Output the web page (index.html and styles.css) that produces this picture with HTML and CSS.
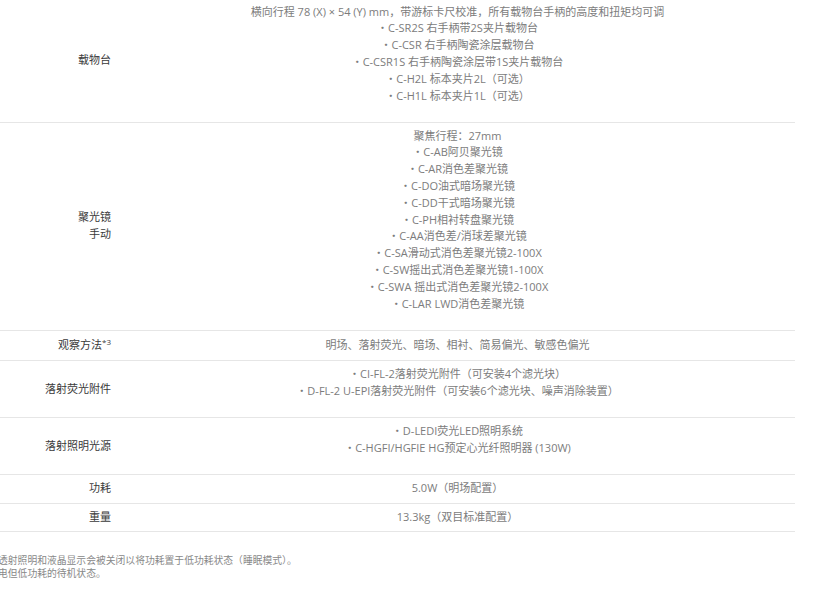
FILE: index.html
```html
<!DOCTYPE html>
<html lang="zh-CN">
<head>
<meta charset="utf-8">
<title>规格</title>
<link rel="stylesheet" href="styles.css">
</head>
<body>
<div class="page">
  <div class="spec">
    <div class="row">
      <div class="label">载物台</div>
      <div class="value multi">
        <p>横向行程 78 (X) × 54 (Y) mm，带游标卡尺校准，所有载物台手柄的高度和扭矩均可调</p>
        <p>・C-SR2S 右手柄带2S夹片载物台</p>
        <p>・C-CSR 右手柄陶瓷涂层载物台</p>
        <p>・C-CSR1S 右手柄陶瓷涂层带1S夹片载物台</p>
        <p>・C-H2L 标本夹片2L（可选）</p>
        <p>・C-H1L 标本夹片1L（可选）</p>
      </div>
    </div>
    <div class="row">
      <div class="label">聚光镜<br>手动</div>
      <div class="value multi">
        <p>聚焦行程：27mm</p>
        <p>・C-AB阿贝聚光镜</p>
        <p>・C-AR消色差聚光镜</p>
        <p>・C-DO油式暗场聚光镜</p>
        <p>・C-DD干式暗场聚光镜</p>
        <p>・C-PH相衬转盘聚光镜</p>
        <p>・C-AA消色差/消球差聚光镜</p>
        <p>・C-SA滑动式消色差聚光镜2-100X</p>
        <p>・C-SW摇出式消色差聚光镜1-100X</p>
        <p>・C-SWA 摇出式消色差聚光镜2-100X</p>
        <p>・C-LAR LWD消色差聚光镜</p>
      </div>
    </div>
    <div class="row">
      <div class="label">观察方法<sup>*3</sup></div>
      <div class="value tall"><p>明场、落射荧光、暗场、相衬、简易偏光、敏感色偏光</p></div>
    </div>
    <div class="row">
      <div class="label">落射荧光附件</div>
      <div class="value multi">
        <p>・CI-FL-2落射荧光附件（可安装4个滤光块）</p>
        <p>・D-FL-2 U-EPI落射荧光附件（可安装6个滤光块、噪声消除装置）</p>
      </div>
    </div>
    <div class="row">
      <div class="label">落射照明光源</div>
      <div class="value multi">
        <p>・D-LEDI荧光LED照明系统</p>
        <p>・C-HGFI/HGFIE HG预定心光纤照明器 (130W)</p>
      </div>
    </div>
    <div class="row">
      <div class="label">功耗</div>
      <div class="value single"><p>5.0W（明场配置）</p></div>
    </div>
    <div class="row">
      <div class="label">重量</div>
      <div class="value single"><p>13.3kg（双目标准配置）</p></div>
    </div>
  </div>
  <div class="notes">
    <p>透射照明和液晶显示会被关闭以将功耗置于低功耗状态（睡眠模式）。</p>
    <p>电但低功耗的待机状态。</p>
  </div>
</div>
</body>
</html>
```

FILE: styles.css
```css
html, body {
  margin: 0;
  padding: 0;
  background: #ffffff;
}

body {
  overflow: hidden;
  font-family: "Open Sans", "Noto Sans CJK SC", sans-serif;
  font-size: 11px;
  line-height: 16.8px;
}

.page {
  width: 822px;
  margin-top: -1.4px;
}

.spec {
  width: 795px;
}

.row {
  display: flex;
  align-items: center;
  border-bottom: 1px solid #e6e6e6;
}

.label {
  width: 111px;
  padding-right: 9px;
  flex: none;
  text-align: right;
  color: #3a3a3a;
}

.label sup {
  font-size: 8px;
  line-height: 0;
  vertical-align: 4px;
}

.value {
  flex: 1;
  text-align: center;
  color: #7c7c7c;
  align-self: stretch;
}

.value p {
  margin: 0;
}

.value.multi {
  padding: 5px 0 17.2px;
}

.value.single {
  padding: 5.5px 0;
}

.value.tall {
  padding: 6.5px 0;
}

.notes {
  margin-top: 23px;
  margin-left: -2px;
  font-size: 9.8px;
  line-height: 12.6px;
  color: #888888;
}

.notes p {
  margin: 0;
}
```
